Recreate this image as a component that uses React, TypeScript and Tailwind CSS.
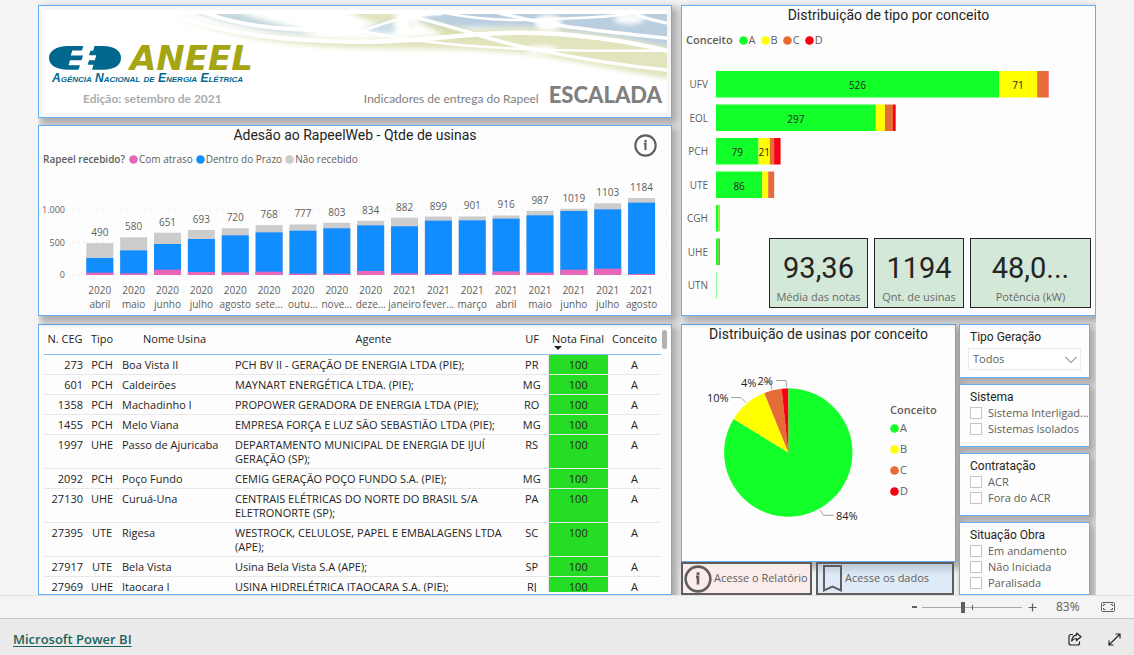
import React from 'react';
import type { ReactNode } from 'react';

const GREEN = '#13ff29';
const YELLOW = '#ffff00';
const ORANGE = '#e66c37';
const RED = '#f80012';

const CARD = 'border border-[#62aef7] bg-[#fdfdfd] shadow-[4px_4px_7px_2px_rgba(0,0,0,0.3)]';
const TITLE = "text-center font-['Roboto','Liberation_Sans',sans-serif] text-[14px] leading-[18px] text-[#252423]";

const months: [string, string, number, number, number][] = [
  ['2020', 'abril', 36, 262, 490],
  ['2020', 'maio', 26, 379, 580],
  ['2020', 'junho', 82, 477, 651],
  ['2020', 'julho', 46, 554, 693],
  ['2020', 'agosto', 41, 610, 720],
  ['2020', 'sete...', 51, 656, 768],
  ['2020', 'outu...', 21, 682, 777],
  ['2020', 'nove...', 21, 718, 803],
  ['2020', 'deze...', 62, 764, 834],
  ['2021', 'janeiro', 26, 749, 882],
  ['2021', 'fever...', 15, 836, 899],
  ['2021', 'março', 21, 841, 901],
  ['2021', 'abril', 56, 867, 916],
  ['2021', 'maio', 36, 918, 987],
  ['2021', 'junho', 82, 985, 1019],
  ['2021', 'julho', 97, 1010, 1103],
  ['2021', 'agosto', 15, 1113, 1184],
];

const types: { name: string; seg: number[]; labels: string[] }[] = [
  { name: 'UFV', seg: [526, 71, 20, 1], labels: ['526', '71'] },
  { name: 'EOL', seg: [297, 17, 15, 5], labels: ['297'] },
  { name: 'PCH', seg: [79, 21, 8, 12], labels: ['79', '21'] },
  { name: 'UTE', seg: [86, 11, 10, 1], labels: ['86'] },
  { name: 'CGH', seg: [5, 1, 1, 0], labels: [] },
  { name: 'UHE', seg: [5, 0, 1, 1], labels: [] },
  { name: 'UTN', seg: [1, 0, 0, 0], labels: [] },
];

const plants: [string, string, string, string, string][] = [
  ['273', 'PCH', 'Boa Vista II', 'PCH BV II - GERAÇÃO DE ENERGIA LTDA (PIE);', 'PR'],
  ['601', 'PCH', 'Caldeirões', 'MAYNART ENERGÉTICA LTDA. (PIE);', 'MG'],
  ['1358', 'PCH', 'Machadinho I', 'PROPOWER GERADORA DE ENERGIA LTDA (PIE);', 'RO'],
  ['1455', 'PCH', 'Melo Viana', 'EMPRESA FORÇA E LUZ SÃO SEBASTIÃO LTDA (PIE);', 'MG'],
  ['1997', 'UHE', 'Passo de Ajuricaba', 'DEPARTAMENTO MUNICIPAL DE ENERGIA DE IJUÍ GERAÇÃO (SP);', 'RS'],
  ['2092', 'PCH', 'Poço Fundo', 'CEMIG GERAÇÃO POÇO FUNDO S.A. (PIE);', 'MG'],
  ['27130', 'UHE', 'Curuá-Una', 'CENTRAIS ELÉTRICAS DO NORTE DO BRASIL S/A ELETRONORTE (SP);', 'PA'],
  ['27395', 'UTE', 'Rigesa', 'WESTROCK, CELULOSE, PAPEL E EMBALAGENS LTDA (APE);', 'SC'],
  ['27917', 'UTE', 'Bela Vista', 'Usina Bela Vista S.A (APE);', 'SP'],
  ['27969', 'UHE', 'Itaocara I', 'USINA HIDRELÉTRICA ITAOCARA S.A. (PIE);', 'RJ'],
];

function InfoIcon({ className }: { className: string }) {
  return (
    <svg viewBox="0 0 24 24" className={className} fill="none" stroke="#605e5c" strokeWidth="2.2">
      <circle cx="12" cy="12" r="10.6" />
      <path d="M10.300 10.200h1.700v6.600" strokeWidth="2.2" />
      <path d="M12 6.200v2.400" strokeWidth="2.4" />
    </svg>
  );
}

function Dot({ color }: { color: string }) {
  return (
    <svg viewBox="0 0 9 9" className="size-[9px] shrink-0">
      <circle cx="4.5" cy="4.5" r="4.3" fill={color} />
    </svg>
  );
}

function LegendItem({ color, children }: { color: string; children: ReactNode }) {
  return (
    <li className="flex items-center gap-px">
      <Dot color={color} />
      <span>{children}</span>
    </li>
  );
}

function HeaderWaves() {
  return (
    <svg viewBox="0 0 626 104" className="absolute inset-0 h-full w-full" preserveAspectRatio="none" aria-hidden="true">
      <defs>
        <filter id="soft" x="-10%" y="-30%" width="120%" height="160%">
          <feGaussianBlur stdDeviation="2.8" />
        </filter>
        <filter id="line" x="-10%" y="-30%" width="120%" height="160%">
          <feGaussianBlur stdDeviation="0.6" />
        </filter>
        <clipPath id="band">
          <rect x="0" y="4" width="626" height="96" />
        </clipPath>
      </defs>
      <g clipPath="url(#band)">
        <g filter="url(#soft)">
          <path d="M122 2 C170 20 230 30 320 30 C390 30 420 20 470 18 C540 18 590 30 630 38 V70 C560 58 520 48 470 43 C420 38 370 40 310 38 C240 36 170 24 122 2Z" fill="#e2e4be" />
          <path d="M145 0 C190 16 230 24 275 25 C240 14 210 8 190 0Z" fill="#c4d8dc" />
          <path d="M375 10 C410 -6 480 -4 630 -2 V38 C590 28 540 20 480 17 C440 17 410 20 375 10Z" fill="#b9cedf" />
          <path d="M300 0 H345 L375 18 L330 12Z" fill="#e2e4be" />
          <path d="M318 21 C340 11 355 9 372 11 L348 24Z" fill="#c8dee8" />
          <path d="M372 10 C410 16 440 22 460 25 L415 31Z" fill="#dcdeb2" />
          <ellipse cx="507" cy="13" rx="13" ry="8" fill="#fff" />
          <ellipse cx="360" cy="14" rx="8" ry="8" fill="#fff" />
          <ellipse cx="588" cy="9" rx="15" ry="5" fill="#fff" />
          <ellipse cx="500" cy="40" rx="16" ry="4" fill="#fff" />
        </g>
        <g fill="none" stroke="#fff" filter="url(#line)">
          <path d="M122 3 C190 27 250 31 310 32 C370 33 420 24 470 23 C530 22 590 32 630 42" strokeWidth="4.5" />
          <path d="M160 2 C200 18 250 20 300 22" strokeWidth="4" />
          <path d="M372 7 C430 22 460 34 490 39 C550 52 590 57 630 61" strokeWidth="3.5" />
          <path d="M318 21 C380 34 440 38 500 40 C560 42 600 41 630 41" strokeWidth="2.5" />
          <path d="M398 2 C440 11 480 11 510 9 C550 8 580 6 600 2" strokeWidth="2.5" />
          <path d="M455 2 C510 18 570 22 630 29" strokeWidth="3.5" />
          <path d="M590 2 C600 8 615 11 630 14" strokeWidth="3" />
          <path d="M322 21 C350 10 370 4 400 4" strokeWidth="2.5" />
        </g>
      </g>
    </svg>
  );
}

function Logo() {
  return (
    <svg viewBox="0 -9 220 54" className="block h-[54px] w-[220px]" role="img" aria-label="ANEEL">
      <g fill="#00688f">
        <path d="M35.300 0 H20 C8 0 1 5 1 12 C1 19 8 23.700 20 23.700 H30.500 L32 19.300 H20.500 L22 14.300 H33.500 L35 9.500 H22.800 L24.300 4.500 H33.900Z" />
        <path d="M46.500 0 H55 C67 0 73 5 73 12 C73 19 67 23.700 55 23.700 H44 L45.500 18.700 H39.700 L41 14.300 H46.800 L48.300 9.200 H41 L42.400 4.800 H45.200Z" />
      </g>
      <text x="82" y="23.500" fill="#a5a514" fontFamily="DejaVu Sans, sans-serif" fontWeight="700" fontStyle="italic" fontSize="34">
        ANEEL
      </text>
      <text x="4" y="36" fill="#00688f" fontFamily="Liberation Sans, sans-serif" fontWeight="700" fontStyle="italic" fontSize="12" style={{ fontVariant: 'small-caps' }}>
        Agência Nacional de Energia Elétrica
      </text>
    </svg>
  );
}

function HeaderCard() {
  return (
    <header className={`${CARD} h-[113px] bg-[#f6f6f6]! p-1`}>
      <div className="relative flex h-full flex-col bg-white font-['Lato','Liberation_Sans',sans-serif]">
        <HeaderWaves />
        <div className="relative pt-[27px] pl-[5px]">
          <Logo />
        </div>
        <div className="relative -mt-2 flex items-baseline justify-between pr-[5px] pl-10 leading-6">
          <p className="text-[12px] font-bold text-[#ababab]">Edição: setembro de 2021</p>
          <h1 className="flex items-baseline gap-2.5 text-[12px] text-[#808080]">
            Indicadores de entrega do Rapeel <strong className="text-[22px] font-black">ESCALADA</strong>
          </h1>
        </div>
      </div>
    </header>
  );
}

function AdoptionCard() {
  const zero = 110;
  const k = 0.065;
  return (
    <section className={`${CARD} relative h-[191px]`}>
      <h2 className={TITLE}>Adesão ao RapeelWeb - Qtde de usinas</h2>
      <button type="button" aria-label="Informações" className="absolute top-2 right-3.5">
        <InfoIcon className="size-[23px]" />
      </button>
      <div className="flex h-[21px] items-end gap-1 pl-1 text-[10px] leading-[12px] text-[#605e5c]">
        <b className="font-semibold">Rapeel recebido?</b>
        <ul className="flex gap-[3px]">
          <LegendItem color="#e867b9">Com atraso</LegendItem>
          <LegendItem color="#118dff">Dentro do Prazo</LegendItem>
          <LegendItem color="#cccccc">Não recebido</LegendItem>
        </ul>
      </div>
      <svg viewBox="0 0 632 150" className="block w-full" fontSize="10" fill="#605e5c" textAnchor="middle">
        {[0, 500, 1000].map((v) => (
          <g key={v}>
            <line x1="33" x2="632" y1={zero - v * k} y2={zero - v * k} stroke="#dcdcdc" strokeDasharray="1 5" />
            <text x="26" y={zero - v * k + 3} textAnchor="end" fontSize="9">
              {v === 1000 ? '1.000' : v}
            </text>
          </g>
        ))}
        {months.map(([year, month, late, onTime, total], i) => {
          const x = 47.3 + i * 33.86;
          const c = x + 13.5;
          return (
            <g key={i}>
              <rect x={x} width="27" y={zero - total * k} height={total * k} fill="#cccccc" />
              <rect x={x} width="27" y={zero - onTime * k} height={onTime * k} fill="#118dff" />
              <rect x={x} width="27" y={zero - late * k} height={late * k} fill="#e867b9" />
              <text x={c} y={zero - total * k - 7}>{total}</text>
              <text x={c} y="129">{year}</text>
              <text x={c} y="143">{month}</text>
            </g>
          );
        })}
      </svg>
    </section>
  );
}

function PlantTable() {
  return (
    <section className={`${CARD} h-[271px] pb-0.5`}>
      <div className="flex h-full gap-px overflow-hidden pr-1 pl-[5px]">
        <table className="w-full table-fixed border-collapse self-start text-[11px] leading-[14px] text-[#252423]">
          <colgroup>
            <col className="w-[42px]" />
            <col className="w-[32px]" />
            <col className="w-[113px]" />
            <col />
            <col className="w-[32px]" />
            <col className="w-[60px]" />
            <col className="w-[53px]" />
          </colgroup>
          <thead>
            <tr className="h-[29px] border-b border-[#7fbcf8] whitespace-nowrap [&>th]:p-0 [&>th]:font-normal">
              <th>N. CEG</th>
              <th>Tipo</th>
              <th>Nome Usina</th>
              <th>Agente</th>
              <th>UF</th>
              <th className="relative">
                Nota Final
                <span className="absolute bottom-1 left-1.5 h-0 w-0 border-x-4 border-t-4 border-x-transparent border-t-[#252423]" />
              </th>
              <th>Conceito</th>
            </tr>
          </thead>
          <tbody>
            {plants.map(([ceg, tipo, nome, agente, uf]) => (
              <tr key={ceg} className="border-b border-[#e8e8e8] align-top [&>td]:pt-[3px] [&>td]:pb-[2px] [&>td]:leading-[14px]">
                <td className="pr-[3px] text-right">{ceg}</td>
                <td className="text-center">{tipo}</td>
                <td className="pl-1">{nome}</td>
                <td className="pl-1">{agente}</td>
                <td className="text-center">{uf}</td>
                <td className="border-l border-[#e8e8e8] bg-[#26dd26] text-center">100</td>
                <td className="text-center">A</td>
              </tr>
            ))}
          </tbody>
        </table>
        <span className="mt-[5px] h-[19px] w-[5px] shrink-0 rounded-full bg-[#b3b0ad]" />
      </div>
    </section>
  );
}

function Kpi({ value, label, className }: { value: string; label: string; className: string }) {
  return (
    <div className={`flex h-[70px] flex-col items-center justify-end border border-[#252423] bg-[#d3e8d7] ${className}`}>
      <strong className="font-['Roboto','Liberation_Sans',sans-serif] text-[29px] leading-[38px] font-normal text-[#252423]">{value}</strong>
      <span className="text-[11px] leading-[20px] whitespace-nowrap text-[#6b6a68]">{label}</span>
    </div>
  );
}

function TypeCard() {
  const colors = [GREEN, YELLOW, ORANGE, RED];
  const k = 0.538;
  return (
    <section className={`${CARD} relative h-[311px]`}>
      <h2 className={TITLE}>Distribuição de tipo por conceito</h2>
      <div className="flex h-[24px] items-end gap-1.5 pl-1 text-[11px] leading-[16px] text-[#605e5c]">
        <b className="font-semibold">Conceito</b>
        <ul className="flex gap-[5px]">
          {['A', 'B', 'C', 'D'].map((n, i) => (
            <LegendItem key={n} color={colors[i]}>{n}</LegendItem>
          ))}
        </ul>
      </div>
      <svg viewBox="0 0 413 255" className="mt-3 block w-full" fontSize="10">
        {types.map(({ name, seg, labels }, row) => {
          const y = 11 + row * 33.5;
          let x = 34;
          return (
            <g key={name}>
              <text x="26" y={y + 17} textAnchor="end" fill="#605e5c">{name}</text>
              {seg.map((v, i) => {
                const start = x;
                x += v * k;
                return (
                  <g key={i}>
                    <rect x={start} y={y} width={v * k} height="26.5" fill={colors[i]} />
                    {labels[i] && (
                      <text x={start + (v * k) / 2} y={y + 18} textAnchor="middle" fill="#252423">{labels[i]}</text>
                    )}
                  </g>
                );
              })}
            </g>
          );
        })}
      </svg>
      <div className="absolute right-1 bottom-[7px] flex gap-1.5">
        <Kpi value="93,36" label="Média das notas" className="w-[99px]" />
        <Kpi value="1194" label="Qnt. de usinas" className="w-[90px]" />
        <Kpi value="48,0..." label="Potência (kW)" className="w-[121px]" />
      </div>
    </section>
  );
}

function slice(from: number, to: number) {
  const p = (deg: number) => {
    const a = (deg * Math.PI) / 180;
    return `${106.3 + 64.2 * Math.sin(a)} ${107.5 - 64.2 * Math.cos(a)}`;
  };
  return `M106.3 107.5 L${p(from)} A64.2 64.2 0 ${to - from > 180 ? 1 : 0} 1 ${p(to)}Z`;
}

function PieCard() {
  return (
    <section className={`${CARD} h-[238px]`}>
      <h2 className={TITLE}>Distribuição de usinas por conceito</h2>
      <div className="mt-0.5 flex">
        <svg viewBox="0 0 208 216" className="min-w-0 flex-1" fontSize="11" fill="#252423">
          <path d={slice(0, 301.5)} fill={GREEN} />
          <path d={slice(301.5, 338)} fill={YELLOW} />
          <path d={slice(338, 354)} fill={ORANGE} />
          <path d={slice(354, 359.9)} fill={RED} />
          <g fill="none" stroke="#a19f9d">
            <path d="M138 165 L141.500 170.300 H151.500" />
            <path d="M49 52.500 H59 L63.700 57.500" />
            <path d="M80.500 37.300 H88.300 L90 44" />
            <path d="M94 35.500 H104 L104.700 42" />
          </g>
          <text x="154" y="175">84%</text>
          <text x="25" y="57">10%</text>
          <text x="59" y="42">4%</text>
          <text x="75.500" y="40">2%</text>
        </svg>
        <div className="w-[65px] pt-[57px] text-[11px] text-[#605e5c]">
          <b className="block leading-4 font-semibold">Conceito</b>
          <ul className="[&>li]:h-[21px]">
            <LegendItem color={GREEN}>A</LegendItem>
            <LegendItem color={YELLOW}>B</LegendItem>
            <LegendItem color={ORANGE}>C</LegendItem>
            <LegendItem color={RED}>D</LegendItem>
          </ul>
        </div>
      </div>
    </section>
  );
}

function Filter({ title, className, children }: { title: string; className: string; children: ReactNode }) {
  return (
    <fieldset className={`${CARD} relative min-w-0 px-2.5 pt-1 ${className}`}>
      <legend className="float-left w-full p-0 font-['Roboto','Liberation_Sans',sans-serif] text-[12px] leading-4 text-[#252423]">{title}</legend>
      <div className="clear-both">{children}</div>
    </fieldset>
  );
}

function Check({ label }: { label: string }) {
  return (
    <label className="flex h-4 items-center gap-1.5 text-[11px] text-[#605e5c]">
      <input type="checkbox" className="size-3 shrink-0 appearance-none border border-[#c8c6c4] bg-white checked:bg-[#605e5c]" />
      <span className="-mr-2 whitespace-nowrap">{label}</span>
    </label>
  );
}

function Filters() {
  return (
    <div className="flex min-w-0 flex-col gap-1.5">
      <Filter title="Tipo Geração" className="h-[54px]">
        <div className="relative -mx-0.5 pt-[3px]">
          <select aria-label="Tipo Geração" className="block h-[22px] w-full appearance-none border border-[#eaeaea] bg-white p-0 pl-1 text-[11px] leading-5 text-[#605e5c]">
            <option>Todos</option>
          </select>
          <svg viewBox="0 0 12 8" className="pointer-events-none absolute top-[11px] right-1 h-2 w-3" fill="none" stroke="#605e5c">
            <path d="M0.500 1 L6 6.500 L11.500 1" />
          </svg>
        </div>
      </Filter>
      <Filter title="Sistema" className="h-[63px]">
        <Check label="Sistema Interligad..." />
        <Check label="Sistemas Isolados" />
      </Filter>
      <Filter title="Contratação" className="h-[63px]">
        <Check label="ACR" />
        <Check label="Fora do ACR" />
      </Filter>
      <Filter title="Situação Obra" className="h-[73px]">
        <Check label="Em andamento" />
        <Check label="Não Iniciada" />
        <Check label="Paralisada" />
      </Filter>
    </div>
  );
}

export default function App() {
  return (
    <div className="flex min-h-screen flex-col bg-[#f4f4f4] font-['Open_Sans','Noto_Sans',sans-serif]">
      <main className="mx-[38px] grid grid-cols-[minmax(0,634fr)_minmax(0,415fr)] gap-[9px] overflow-hidden pt-[5px]">
        <div className="flex min-w-0 flex-col">
          <HeaderCard />
          <div className="mt-[7px] mb-2">
            <AdoptionCard />
          </div>
          <PlantTable />
        </div>
        <div className="flex min-w-0 flex-col gap-2">
          <TypeCard />
          <div className="grid grid-cols-[minmax(0,275fr)_minmax(0,131fr)] gap-[3px] pr-1.5">
            <div className="min-w-0">
              <PieCard />
              <div className="relative grid grid-cols-[minmax(0,131fr)_minmax(0,138fr)] gap-1 pr-0.5 text-[11px] text-[#605e5c]">
                <button type="button" className="flex h-[33px] items-center gap-0.5 border-2 border-[#605e5c] bg-[#fbecec] pl-px whitespace-nowrap">
                  <InfoIcon className="size-7 shrink-0" />
                  Acesse o Relatório
                </button>
                <button type="button" className="flex h-[33px] items-center gap-[3px] border-2 border-[#605e5c] bg-linear-to-b from-[#bdc9d4] to-[#deebf7] to-40% pl-[5px] whitespace-nowrap">
                  <svg viewBox="0 0 19 29" className="h-[29px] w-[19px] shrink-0" fill="none" stroke="#605e5c" strokeWidth="2">
                    <path d="M1 2 H18 V26.500 L9.500 22.500 L1 26.500Z" />
                  </svg>
                  Acesse os dados
                </button>
              </div>
            </div>
            <Filters />
          </div>
        </div>
      </main>

      <div className="flex h-[23px] items-center justify-end border-t border-[#e1e1e1] pr-[19px] text-[#605e5c]">
        <button type="button" aria-label="Reduzir" className="flex h-4 w-4 items-center justify-center">
          <span className="h-0.5 w-[5px] bg-[#605e5c]" />
        </button>
        <div className="relative flex items-center">
          <input
            type="range"
            aria-label="Zoom"
            min="0"
            max="100"
            defaultValue="41"
            className="h-[11px] w-[100px] appearance-none bg-linear-to-b from-transparent from-[45%] via-[#605e5c] via-[45%] to-transparent to-[55%] [&::-webkit-slider-thumb]:h-[11px] [&::-webkit-slider-thumb]:w-1 [&::-webkit-slider-thumb]:appearance-none [&::-webkit-slider-thumb]:bg-[#605e5c]"
          />
          <span className="pointer-events-none absolute left-1/2 h-[5px] w-px bg-[#605e5c]" />
        </div>
        <button type="button" aria-label="Ampliar" className="mr-3.5 flex h-5 w-5 items-center justify-center">
          <svg viewBox="0 0 9 9" className="size-[9px]" stroke="#605e5c" strokeWidth="1.2">
            <path d="M4.500 0.500v8M0.500 4.500h8" />
          </svg>
        </button>
        <span className="mr-5 w-[25px] text-[12px] whitespace-nowrap">83%</span>
        <button type="button" aria-label="Ajustar à página">
          <svg viewBox="0 0 14 10" className="h-[10px] w-[14px]" fill="none" stroke="#605e5c">
            <rect x="0.500" y="0.500" width="13" height="9" rx="1" />
            <path d="M2.500 4V2.500H4.500M9.500 2.500H11.500V4M11.500 6V7.500H9.500M4.500 7.500H2.500V6" />
          </svg>
        </button>
      </div>

      <footer className="flex flex-1 items-center justify-between border-t border-[#c8c8c8] bg-[#eaeaea] px-[13px] pt-1">
        <a href="#power-bi" className="font-['Open_Sans','Noto_Sans',sans-serif] text-[13px] leading-5 font-semibold text-[#1a645a] underline underline-offset-2">
          Microsoft Power BI
        </a>
        <div className="flex items-center gap-[26px]">
          <button type="button" aria-label="Compartilhar">
            <svg viewBox="0 0 14 14" className="size-[14px]" fill="none" stroke="#252423" strokeWidth="1.2" strokeLinejoin="round">
              <path d="M5 2.500H3a2 2 0 0 0-2 2V11a2 2 0 0 0 2 2h6.500a2 2 0 0 0 2-2V9.500" />
              <path d="M8.500 1 L13 4.800 L8.500 8.500 V6.500 C6 6.500 4.800 7.300 3.700 9 C4 6 5.500 3.500 8.500 3.200Z" />
            </svg>
          </button>
          <button type="button" aria-label="Tela inteira">
            <svg viewBox="0 0 13 13" className="size-[13px]" fill="none" stroke="#252423" strokeWidth="1.2">
              <path d="M1 12 L12 1 M7.500 1 H12 V5.500 M1 7.500 V12 H5.500" />
            </svg>
          </button>
        </div>
      </footer>
    </div>
  );
}
